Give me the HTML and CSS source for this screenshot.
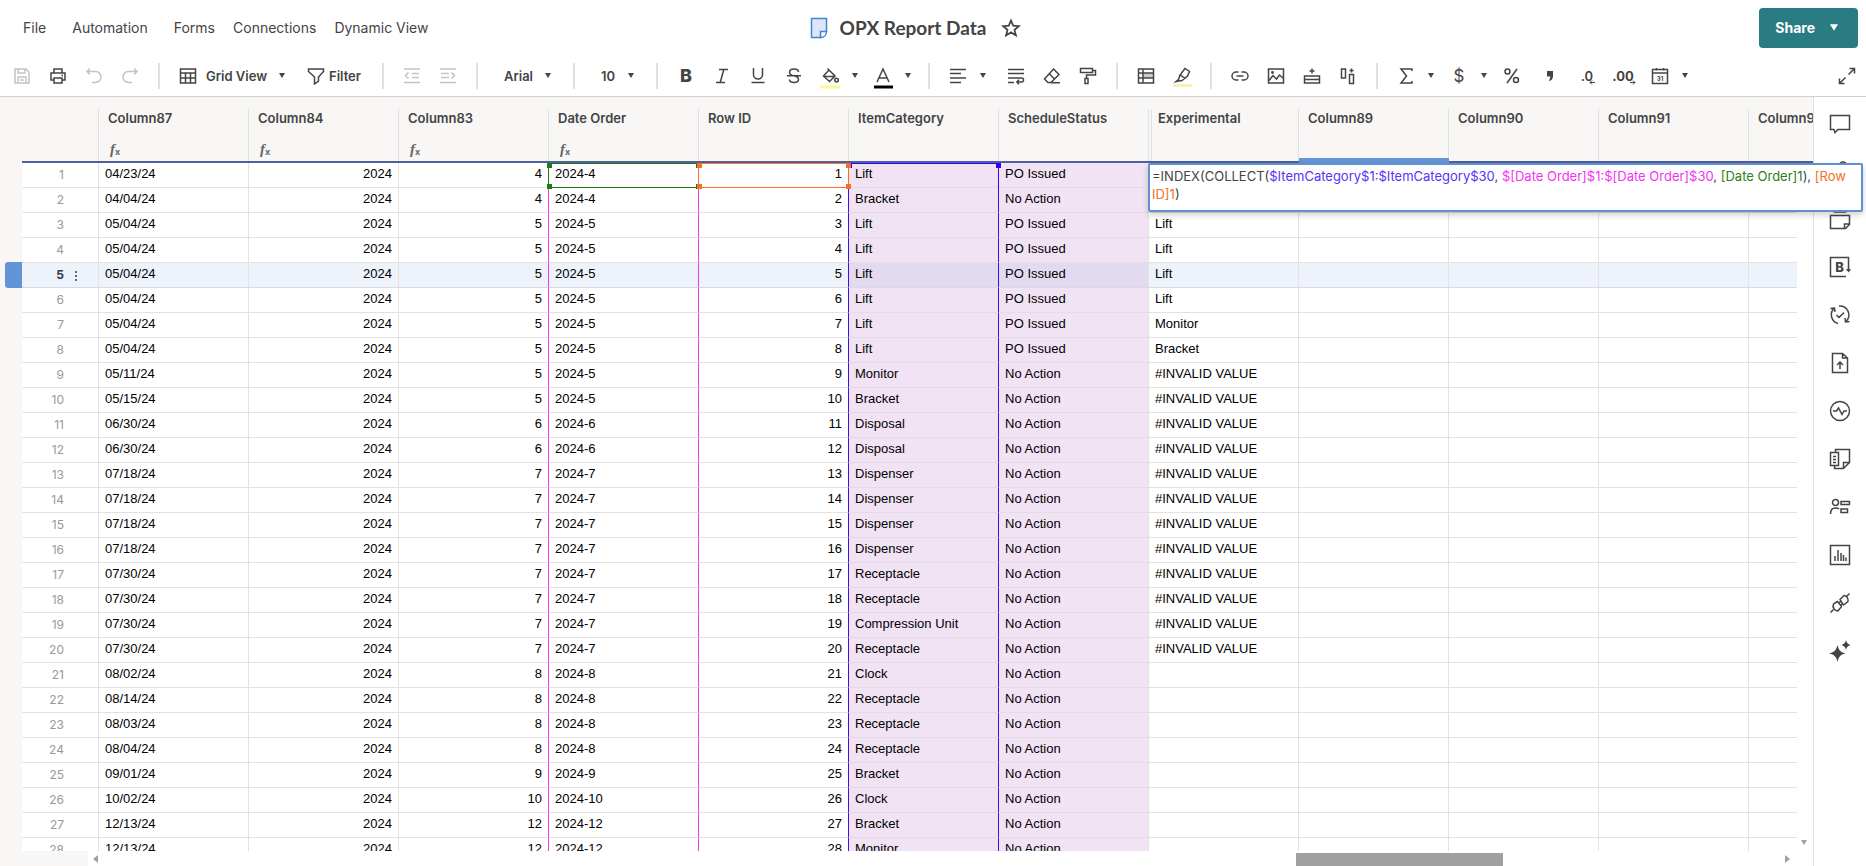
FILE: index.html
```
<!DOCTYPE html>
<html lang="en">
<head>
<meta charset="utf-8">
<title>OPX Report Data</title>
<link rel="stylesheet" href="styles.css">
</head>
<body>
<svg class="defs" aria-hidden="true">
  <symbol id="caret" viewBox="0 0 6 5"><path d="M0 0h6L3 5z" fill="currentColor"/></symbol>
</svg>

<header class="topbar">
  <nav class="menu">
    <button type="button">File</button>
    <button type="button">Automation</button>
    <button type="button">Forms</button>
    <button type="button" class="tight">Connections</button>
    <button type="button" class="tight">Dynamic View</button>
  </nav>
  <div class="title">
    <svg width="18" height="22" viewBox="0 0 18 22"><path d="M1.500 1.500h15v13l-5 6h-10z" fill="#dce6f8" stroke="#3f86cf" stroke-width="1.500"/><path d="M10.500 20.500v-6h6c0 3.500-2.500 6-6 6z" fill="#fff" stroke="#3f86cf" stroke-width="1.500"/></svg>
    <h1>OPX Report Data</h1>
    <button type="button" aria-label="Favorite"><svg width="20" height="20" viewBox="0 0 20 20"><path d="M10 2.500l2.200 5.200 5.600.5-4.300 3.700 1.400 5.500-4.900-3-4.900 3 1.400-5.500L2.200 8.200l5.600-.5z" fill="none" stroke="#444" stroke-width="1.800"/></svg></button>
  </div>
  <button type="button" class="share">Share <svg width="8" height="7"><use href="#caret"/></svg></button>
</header>

<div class="toolbar" role="toolbar" aria-label="Formatting">
  <button type="button" class="off" aria-label="Save" disabled><svg class="ic" viewBox="0 0 18 18"><path d="M2 2h11l3 3v11H2z M5 2v4h7V2 M5 16v-6h8v6 M7 13h4"/></svg></button>
  <button type="button" aria-label="Print"><svg class="ic" viewBox="0 0 18 18"><path d="M5 6V2h8v4 M5 13H2V6h14v7h-3 M5 11h8v5H5z M12.500 8.500h1.500"/></svg></button>
  <button type="button" class="off" aria-label="Undo" disabled><svg class="ic" viewBox="0 0 18 18"><path d="M5 1.500L2 4.500l3 3 M2 4.500h8.500a5.500 5.500 0 0 1 0 11H7"/></svg></button>
  <button type="button" class="off" aria-label="Redo" disabled><svg class="ic" viewBox="0 0 18 18"><path d="M13 1.500l3 3-3 3 M16 4.500H7.500a5.500 5.500 0 0 0 0 11H11"/></svg></button>
  <i class="sep"></i>
  <button type="button" class="view"><svg class="ic" viewBox="0 0 18 18"><path d="M1.500 2h15v14h-15z M1.500 6h15 M1.500 11h15 M6.500 6v10 M11.500 6v10"/></svg>Grid View <svg class="car"><use href="#caret"/></svg></button>
  <button type="button" class="filter"><svg class="ic" viewBox="0 0 18 18"><path d="M1.500 2h15v2.500L11.500 10v4l-4 3v-7L1.500 4.500z"/></svg>Filter</button>
  <i class="sep"></i>
  <button type="button" class="off" aria-label="Outdent" disabled><svg class="ic" viewBox="0 0 18 18"><path d="M1 2h16 M9 6.500h7 M9 10.500h7 M1 15.500h16 M5.500 5.500L2.500 8.500l3 3"/></svg></button>
  <button type="button" class="off" aria-label="Indent" disabled><svg class="ic" viewBox="0 0 18 18"><path d="M1 2h16 M2 6.500h8 M2 10.500h8 M1 15.500h16 M12.500 5.500l3 3-3 3"/></svg></button>
  <i class="sep"></i>
  <label class="pick font"><select aria-label="Font"><option>Arial</option></select><svg class="car"><use href="#caret"/></svg></label>
  <i class="sep"></i>
  <label class="pick size"><select aria-label="Font size"><option>10</option></select><svg class="car"><use href="#caret"/></svg></label>
  <i class="sep"></i>
  <button type="button" class="bold" aria-label="Bold">B</button>
  <button type="button" aria-label="Italic"><svg class="ic" viewBox="0 0 18 18"><path d="M6 2.500h9 M3 15.500h9 M10.800 2.500l-3.600 13"/></svg></button>
  <button type="button" aria-label="Underline"><svg class="ic" viewBox="0 0 18 18"><path d="M4.500 1v6.500a4.500 4.500 0 0 0 9 0V1 M2.500 15.500h13"/></svg></button>
  <button type="button" aria-label="Strikethrough"><svg class="ic" viewBox="0 0 18 18"><path d="M13.500 5c0-2-2-3-4.500-3S4.500 3 4.500 5.200C4.500 7 6 8.200 9 8.800s4.500 2 4.500 3.700-2 3-4.500 3-4.500-1-4.500-3 M2 8.800h14"/></svg></button>
  <button type="button" aria-label="Fill color"><svg class="ic tall" viewBox="0 0 20 22"><path d="M9 3l6 6-5.500 5.500L3.500 9z M4 9.500h10.500 M7.500 1.500l4 4"/><circle cx="16.500" cy="13" r="1.800"/><path class="yellow" d="M0 20h20"/></svg></button>
  <button type="button" class="drop" aria-label="Fill color options"><svg class="car"><use href="#caret"/></svg></button>
  <button type="button" aria-label="Text color"><svg class="ic tall" viewBox="0 0 20 22"><path d="M4 15L10 2l6 13 M6 11h8"/><path class="black" d="M1 20h19"/></svg></button>
  <button type="button" class="drop" aria-label="Text color options"><svg class="car"><use href="#caret"/></svg></button>
  <i class="sep"></i>
  <button type="button" aria-label="Align"><svg class="ic" viewBox="0 0 18 18"><path d="M1 2.500h16 M1 6.500h11 M1 11h16 M1 15.500h11"/></svg></button>
  <button type="button" class="drop wide" aria-label="Align options"><svg class="car"><use href="#caret"/></svg></button>
  <button type="button" aria-label="Wrap text"><svg class="ic" viewBox="0 0 18 18"><path d="M1 2.500h16 M1 6.500h16 M1 11h13.500a2 2 0 0 1 0 4H10 M1 15.500h6 M12 12.800L9.800 15l2.200 2.200"/></svg></button>
  <button type="button" aria-label="Clear format"><svg class="ic" viewBox="0 0 18 18"><path d="M10.500 2l5.500 5.500-8 8H5L1.500 12z M6 6.500l5.500 5.500 M8 15.800h9"/></svg></button>
  <button type="button" aria-label="Format painter"><svg class="ic" viewBox="0 0 18 18"><path d="M1.500 1.500h12v4h-12z M13.500 3.500h3V8H7.500v3 M6 11.500h3v5H6z"/></svg></button>
  <i class="sep"></i>
  <button type="button" aria-label="Conditional formatting"><svg class="ic" viewBox="0 0 18 18"><path d="M6 6h10.500v5H6z" class="shade"/><path d="M1.500 2h15v14h-15z M1.500 6h15 M1.500 11h15 M6 2v14"/></svg></button>
  <button type="button" aria-label="Highlight changes"><svg class="ic tall" viewBox="0 0 20 22"><path d="M13 1.500L8 8l-1.500 4.500L4 14.500l6-1L15.500 9l2-4.500z M8.500 8l4.500 3.500"/><path class="cream" d="M1 18.500h19"/></svg></button>
  <i class="sep"></i>
  <button type="button" aria-label="Link"><svg class="ic" viewBox="0 0 18 18"><path d="M7.500 5H5a4 4 0 0 0 0 8h2.500 M10.500 5H13a4 4 0 0 1 0 8h-2.500 M5.500 9h7"/></svg></button>
  <button type="button" aria-label="Image"><svg class="ic" viewBox="0 0 18 18"><path d="M1.500 2h15v14h-15z M2 13.500l4-5 3.500 3.500L12.500 8l4 3.500"/><circle cx="5.500" cy="5.500" r=".7"/></svg></button>
  <button type="button" aria-label="Insert row"><svg class="ic" viewBox="0 0 18 18"><path d="M1.500 9h15v7h-15z M1.500 12.500h15 M9 1.500v5 M6.500 4h5"/></svg></button>
  <button type="button" aria-label="Insert column"><svg class="ic" viewBox="0 0 18 18"><path d="M2.500 2h4v9h-4z M10.500 7.500h4v9h-4z M12.500 1.500v4 M10.500 3.500h4"/></svg></button>
  <i class="sep"></i>
  <button type="button" aria-label="Sum"><svg class="ic" viewBox="0 0 18 18"><path d="M15 4V2H4l5.500 7L4 16h11v-2"/></svg></button>
  <button type="button" class="drop" aria-label="Functions"><svg class="car"><use href="#caret"/></svg></button>
  <button type="button" class="dollar" aria-label="Currency">$</button>
  <button type="button" class="drop" aria-label="Currency options"><svg class="car"><use href="#caret"/></svg></button>
  <button type="button" aria-label="Percent"><svg class="ic" viewBox="0 0 18 18"><circle cx="4.500" cy="4.500" r="2.500"/><circle cx="13" cy="13" r="2.500"/><path d="M14 2L4 16"/></svg></button>
  <button type="button" class="comma" aria-label="Thousands"><svg class="ic" viewBox="0 0 18 18"><path class="solid" d="M6 4h6v5c0 3-1.500 4.500-4 5l1.500-4.500H6z"/></svg></button>
  <button type="button" class="dec" aria-label="Decrease decimals">.0<svg width="6" height="5" viewBox="0 0 6 5"><path d="M6 2.500H1 M3 .5l-2 2 2 2"/></svg></button>
  <button type="button" class="dec more" aria-label="Increase decimals">.00<svg width="6" height="5" viewBox="0 0 6 5"><path d="M0 2.500h5 M3 .5l2 2-2 2"/></svg></button>
  <button type="button" aria-label="Date format"><svg class="ic" viewBox="0 0 18 18"><path d="M1.500 2.500h15v14h-15z M1.500 6h15 M5.500 1v2.500 M12.500 1v2.500"/><text x="9" y="14" text-anchor="middle">31</text></svg></button>
  <button type="button" class="drop" aria-label="Date options"><svg class="car"><use href="#caret"/></svg></button>
  <button type="button" class="expand" aria-label="Full screen"><svg class="ic" viewBox="0 0 18 18"><path d="M10.500 7.500l6-6 M11.500 1.500h5v5 M7.500 10.500l-6 6 M1.500 11.500v5h5"/></svg></button>
</div>

<main class="main">
  <section class="sheet">
    <div class="grid">
      <table>
        <colgroup><col class="c-gutter"><col class="c-num"><col class="c"><col class="c"><col class="c"><col class="c"><col class="c"><col class="c"><col class="c"><col class="c"><col class="c"><col class="c"><col class="c"><col><col class="c-scroll"></colgroup>
        <thead><tr id="head"></tr></thead>
        <tbody id="rows"></tbody>
      </table>
      <svg class="down"><use href="#caret"/></svg>
    </div>
    <div class="hscroll">
      <span class="corner"></span>
      <svg class="left" width="5" height="8" viewBox="0 0 5 8"><path d="M5 0v8L0 4z" fill="#a0a0a0"/></svg>
      <div class="track"><div class="thumb"></div></div>
      <svg class="right" width="5" height="8" viewBox="0 0 5 8"><path d="M0 0v8l5-4z" fill="#a0a0a0"/></svg>
    </div>
  </section>
  <aside class="side">
    <button type="button" aria-label="Conversations"><svg viewBox="0 0 22 22"><path d="M1.500 3.500h19v14H9l-3 3-1-3H1.500z"/></svg></button>
    <button type="button" aria-label="Attachments"><svg viewBox="0 0 22 22"><path d="M17 8v7a6 6 0 0 1-12 0V6M18 6a4 4 0 0 0-8 0v8"/></svg></button>
    <button type="button" aria-label="Proofs"><svg viewBox="0 0 22 22"><path d="M4.500 4h13 M1.500 7.500h19v9l-4 4h-15z M15.500 20.500v-4.500h5"/></svg></button>
    <button type="button" aria-label="Brandfolder"><svg viewBox="0 0 22 22"><path d="M17 20.500H1.500v-19h18V12 M19.500 11v4"/><path class="solid" d="M17 13h5l-2.500 3.500z"/><text x="10.500" y="16" text-anchor="middle">B</text></svg></button>
    <button type="button" aria-label="Update requests"><svg viewBox="0 0 22 22"><path d="M9 19.500A9 9 0 0 1 4.500 5 M1.500 4.500l4-.5.5 4 M10 2a9 9 0 0 1 7.500 15 M20.500 17.500l-4 .5-.5-4 M7.500 11l2.500 2.500 5-5"/></svg></button>
    <button type="button" aria-label="Publish"><svg viewBox="0 0 22 22"><path d="M3.500 1.500h10l5 4.500v14.500h-15z M13.500 1.500V6h5 M11 17v-7 M8 13l3-3 3 3"/></svg></button>
    <button type="button" aria-label="Activity log"><svg viewBox="0 0 22 22"><circle cx="11" cy="11" r="9.500"/><path d="M4 11h3.500l2-3 3.500 6.500 2-3.500h3"/></svg></button>
    <button type="button" aria-label="Summary"><svg viewBox="0 0 22 22"><path d="M6.500 4.500v-3h14v13l-6 6h-9v-3 M14.500 20.500v-6h6 M1.500 4.500h8v13h-8z M4 8.500h3 M4 11.500h3 M4 14.500h3"/></svg></button>
    <button type="button" aria-label="Contacts"><svg viewBox="0 0 22 22"><circle cx="6.500" cy="6.500" r="3"/><path d="M1.500 18c0-4 2-6 5-6 1.500 0 2.500.2 3.500.8 M12 5.500h8.500v3H12z M12 13h6.500v3.500H12z"/></svg></button>
    <button type="button" aria-label="Charts"><svg viewBox="0 0 22 22"><path d="M1.500 1.500h19v19h-19z M6 12v5 M9 6v11 M12 9v8 M14.500 11v6 M17 13.500v3.500" /></svg></button>
    <button type="button" aria-label="Integrations"><svg viewBox="0 0 22 22"><path d="M1.500 20.500l3-3 M17.500 4.500l3-3 M11 7.500l4-4a5 5 0 0 1 4 6l-4.500 3.500z M8.500 9.500l-4 2.500a5 5 0 0 0 4.500 7l3.500-4.500z M10 11l2-2M12 13l2-2"/></svg></button>
    <button type="button" aria-label="AI tools"><svg viewBox="0 0 22 22"><path class="solid" d="M8.500 5c1.300 5.300 2.700 7 8 8.500-5.300 1.300-6.700 3-8 8.500-1.300-5.500-3-7.200-8.500-8.500C5.500 12 7.200 10.300 8.500 5z M17 0c.8 3.200 1.700 4 5 5-3.300.9-4.200 1.800-5 5-.8-3.200-1.700-4.100-5-5 3.300-1 4.200-1.800 5-5z"/></svg></button>
  </aside>
  <div class="formula" role="textbox" aria-label="Formula" contenteditable="true" spellcheck="false">=INDEX(COLLECT(<span class="f-violet">$ItemCategory$1:$ItemCategory$30</span>, <span class="f-pink">$[Date Order]$1:$[Date Order]$30</span>, <span class="f-green">[Date Order]1</span>), <span class="f-orange">[Row ID]1</span>)</div>
</main>
<script src="script.js"></script>
</body>
</html>
```
FILE: styles.css
```
* { box-sizing: border-box; }
body {
  margin: 0;
  height: 100vh;
  display: flex;
  flex-direction: column;
  overflow: hidden;
  background: #fff;
  color: #444;
  font-family: Inter, "Liberation Sans", sans-serif;
  font-size: 14px;
}
button, select {
  border: 0;
  margin: 0;
  padding: 0;
  background: none;
  font: inherit;
  color: inherit;
}
.defs { display: none; }

/* top bar */
.topbar {
  display: grid;
  grid-template-columns: 1fr auto 1fr;
  align-items: center;
  height: 55px;
  padding: 0 8px;
  flex: none;
}
.menu { display: flex; gap: 26px; padding: 0 0 1px 15px; }
.menu .tight { margin-left: -8px; }
.title { display: flex; align-items: center; padding-right: 35px; }
.title h1 {
  margin: 0 15px 0 12px;
  font: 700 19px/24px Lato, sans-serif;
}
.title svg { display: block; }
.share {
  justify-self: end;
  display: flex;
  align-items: center;
  gap: 15px;
  height: 40px;
  padding: 0 20px 0 16px;
  border-radius: 4px;
  background: #287c82;
  color: #fff;
  font-weight: 700;
}

/* toolbar */
.toolbar {
  display: flex;
  align-items: center;
  height: 42px;
  flex: none;
  padding: 0 1px 0 4px;
  border-bottom: 1px solid #d0d0d0;
}
.toolbar > button {
  flex: none;
  width: 36px;
  height: 36px;
  display: flex;
  align-items: center;
  justify-content: center;
}
.toolbar .off { color: #c4c4c4; }
.ic { width: 18px; height: 18px; flex: none; }
.ic, .side svg, .dec svg {
  fill: none;
  stroke: currentColor;
  stroke-width: 1.5;
}
.ic.tall { width: 20px; height: 22px; margin-top: 4px; }
.ic text { font: 700 6px Inter, sans-serif; fill: #444; stroke: none; }
.ic .solid, .side .solid { fill: #444; stroke: none; }
.ic .shade { fill: #ccc; stroke: none; }
.ic .yellow { stroke: #fafa8c; stroke-width: 3; }
.ic .cream { stroke: #fdeeb4; stroke-width: 3; }
.ic .black { stroke: #000; stroke-width: 3; }
.car { width: 6px; height: 5px; flex: none; }
.sep { flex: none; width: 2px; height: 26px; margin: 0 10px; background: #e0e0e0; }
.toolbar > .view, .toolbar > .filter { justify-content: start; font-weight: 600; font-size: 13px; }
.toolbar > .view { width: 128px; padding-left: 9px; }
.view .ic { margin-right: 9px; }
.view .car { margin: 0 13px 0 auto; }
.toolbar > .filter { width: 74px; padding-left: 9px; }
.filter .ic { margin-right: 4px; }
.pick { flex: none; display: grid; align-items: center; font-weight: 600; font-size: 13px; }
.pick select { grid-area: 1 / 1; appearance: none; height: 32px; padding-left: 16px; outline: 0; }
.pick .car { grid-area: 1 / 1; justify-self: end; margin-right: 12px; pointer-events: none; }
.font { width: 75px; }
.size { width: 61px; }
.toolbar > .bold { font: 800 18px Inter, sans-serif; }
.toolbar > .drop { width: 17px; justify-content: start; padding-left: 4px; }
.toolbar > .drop.wide { width: 22px; }
.toolbar > .dollar { font-size: 17px; }
.toolbar > .comma { width: 40px; }
.toolbar > .dec { font-size: 13px; font-weight: 600; align-items: center; }
.toolbar > .more { font-weight: 700; }
.dec svg { align-self: end; margin: 0 0 9px -4px; stroke-width: 1; }
.toolbar > .expand { margin-left: auto; }

/* sheet */
.main { position: relative; flex: 1; min-height: 0; display: flex; }
.sheet { flex: 1; min-width: 0; display: flex; flex-direction: column; }
.grid { position: relative; flex: 1; min-height: 0; overflow: hidden; }
table { width: 100%; table-layout: fixed; border-collapse: separate; border-spacing: 0; }
.c-gutter { width: 22px; }
.c-num { width: 77px; }
.c { width: 150px; }
.c-scroll { width: 16px; }
th {
  height: 66px;
  padding: 12px 0 0;
  vertical-align: top;
  text-align: left;
  background: #f8f7f5;
  border-bottom: 2px solid #4f5f9f;
  font-size: 13px;
  font-weight: 600;
  overflow: hidden;
  white-space: nowrap;
}
th.gutter { border-bottom-color: #f8f7f5; }
th.current { border-bottom: 5px solid #6494d4; }
.head {
  height: 52px;
  padding-left: 9px;
  border-right: 1px solid #e0e0e0;
  line-height: 18px;
}
.current .head { height: 49px; }
.last .head { border-right: 0; }
.pinned .head { border-left: 1px solid #e0e0e0; margin-left: 2px; padding-left: 6px; }
.fx {
  display: block;
  margin-top: 13px;
  padding-left: 2px;
  font: italic 700 15px/18px "Liberation Serif", serif;
  color: #666;
}
.fx sub { font: 700 9px/9px Inter, sans-serif; vertical-align: -1px; }
td {
  position: relative;
  height: 25px;
  padding: 0 6px;
  vertical-align: top;
  border-right: 1px solid #e2e2e2;
  border-bottom: 1px solid #e2e2e2;
  color: #000;
  font: 13px/21px "Liberation Sans", Arial, sans-serif;
  white-space: nowrap;
}
td.gutter { background: #f8f7f5; border: 0; padding: 0; }
td.num {
  padding-right: 34px;
  text-align: right;
  color: #999;
  font: 12px/24px Inter, sans-serif;
}
td.scroll, td.edge { border-right: 0; }
td.scroll { border-bottom: 0; }
td.r { text-align: right; }
td.magenta { border-right-color: #f434f0; }
td.blue { border-right-color: #3a10f0; }
td.range { background: #f1e3f4; border-bottom-color: #e3dee5; }
.active td:not(.gutter):not(.scroll) { background: #edf2fb; border-bottom-color: #d5dae4; }
.active td.range:not(.gutter):not(.scroll) { background: #e3daf1; }
.active td.num { color: #303848; font-weight: 700; }
.marker {
  position: absolute;
  left: 5px;
  right: 0;
  top: -1px;
  bottom: 0;
  background: #6494d8;
  border-radius: 3px 0 0 3px;
}
.dots { position: absolute; left: 53px; top: 8px; width: 3px; height: 11px; fill: #666; }
.box { position: absolute; inset: 0 -1px -1px -1px; border: 1px solid; pointer-events: none; z-index: 1; }
.box i { position: absolute; width: 5px; height: 5px; background: currentColor; }
.box i:nth-child(1) { left: -2px; top: -1px; }
.box i:nth-child(2) { right: -3px; top: -1px; }
.box i:nth-child(3) { left: -2px; bottom: -2px; }
.box i:nth-child(4) { right: -3px; bottom: -2px; }
.box.g { color: #1f7d10; }
.box.o { color: #f97020; z-index: 2; }
.box.b { color: #3200ff; border-bottom: 0; }
.box.b i:nth-child(n+3) { display: none; }
.down { position: absolute; right: 6px; bottom: 6px; width: 6px; height: 5px; color: #a0a0a0; }

.hscroll { flex: none; display: flex; align-items: center; height: 15px; padding-right: 23px; }
.corner { width: 88px; height: 15px; margin-right: 5px; background: #f8f7f5; }
.track { flex: 1; height: 13px; margin-top: 2px; display: flex; }
.thumb { width: 12.3%; margin-left: 71%; background: #a0a0a0; }

/* right rail */
.side { flex: none; width: 53px; padding: 2px 0; border-left: 1px solid #e0e0e0; display: flex; flex-direction: column; }
.side button { height: 48px; display: grid; place-items: center; }
.side svg { width: 22px; height: 22px; color: #444; overflow: visible; }
.side text { font: 800 13px Inter, sans-serif; fill: #444; stroke: none; }

/* cell editor floating over the grid */
.formula {
  position: absolute;
  left: 1148px;
  right: 3px;
  top: 66px;
  min-height: 49px;
  padding: 2px 10px 7px 2px;
  border: 2px solid #6090d0;
  border-radius: 2px;
  background: #fff;
  box-shadow: 0 3px 6px rgba(0, 0, 0, .18);
  font-size: 13px;
  line-height: 18px;
  z-index: 3;
  outline: 0;
}
.f-violet { color: #5a32f5; }
.f-pink { color: #f432f0; }
.f-green { color: #2a8018; }
.f-orange { color: #f07028; }
```
FILE: script.js
```
const columns = ["Column87", "Column84", "Column83", "Date Order", "Row ID", "ItemCategory",
  "ScheduleStatus", "Experimental", "Column89", "Column90", "Column91", "Column92"];

// date, period, item, status, experimental
const data = [
  ["04/23/24", 4, "Lift", "PO Issued", ""],
  ["04/04/24", 4, "Bracket", "No Action", ""],
  ["05/04/24", 5, "Lift", "PO Issued", "Lift"],
  ["05/04/24", 5, "Lift", "PO Issued", "Lift"],
  ["05/04/24", 5, "Lift", "PO Issued", "Lift"],
  ["05/04/24", 5, "Lift", "PO Issued", "Lift"],
  ["05/04/24", 5, "Lift", "PO Issued", "Monitor"],
  ["05/04/24", 5, "Lift", "PO Issued", "Bracket"],
  ["05/11/24", 5, "Monitor", "No Action", "#INVALID VALUE"],
  ["05/15/24", 5, "Bracket", "No Action", "#INVALID VALUE"],
  ["06/30/24", 6, "Disposal", "No Action", "#INVALID VALUE"],
  ["06/30/24", 6, "Disposal", "No Action", "#INVALID VALUE"],
  ["07/18/24", 7, "Dispenser", "No Action", "#INVALID VALUE"],
  ["07/18/24", 7, "Dispenser", "No Action", "#INVALID VALUE"],
  ["07/18/24", 7, "Dispenser", "No Action", "#INVALID VALUE"],
  ["07/18/24", 7, "Dispenser", "No Action", "#INVALID VALUE"],
  ["07/30/24", 7, "Receptacle", "No Action", "#INVALID VALUE"],
  ["07/30/24", 7, "Receptacle", "No Action", "#INVALID VALUE"],
  ["07/30/24", 7, "Compression Unit", "No Action", "#INVALID VALUE"],
  ["07/30/24", 7, "Receptacle", "No Action", "#INVALID VALUE"],
  ["08/02/24", 8, "Clock", "No Action", ""],
  ["08/14/24", 8, "Receptacle", "No Action", ""],
  ["08/03/24", 8, "Receptacle", "No Action", ""],
  ["08/04/24", 8, "Receptacle", "No Action", ""],
  ["09/01/24", 9, "Bracket", "No Action", ""],
  ["10/02/24", 10, "Clock", "No Action", ""],
  ["12/13/24", 12, "Bracket", "No Action", ""],
  ["12/13/24", 12, "Monitor", "No Action", ""]
];

const withFormula = ["Column87", "Column84", "Column83", "Date Order"];
const headClass = { Experimental: "pinned", Column89: "current", Column92: "last" };

document.getElementById("head").innerHTML =
  '<th class="gutter"></th><th><div class="head"></div></th>' +
  columns.map((name, i) => {
    const span = i === columns.length - 1 ? ' colspan="2"' : "";
    const fx = withFormula.includes(name) ? '<span class="fx">f<sub>x</sub></span>' : "";
    return `<th scope="col" class="${headClass[name] || ""}"${span}><div class="head">${name}${fx}</div></th>`;
  }).join("");

const box = kind => `<div class="box ${kind}"><i></i><i></i><i></i><i></i></div>`;

document.getElementById("rows").innerHTML = data.map(([date, period, item, status, exp], i) => {
  const n = i + 1;
  const first = n === 1;
  const active = n === 5;
  const dots = '<svg class="dots" viewBox="0 0 3 11"><path d="M0 0h2v2H0z M0 4h2v2H0z M0 8h2v2H0z"/></svg>';
  return `<tr class="${active ? "active" : ""}">
    <td class="gutter">${active ? '<span class="marker"></span>' : ""}</td>
    <td class="num">${n}${active ? dots : ""}</td>
    <td>${date}</td><td class="r">2024</td>
    <td class="r magenta">${period}</td>
    <td class="magenta">2024-${period}${first ? box("g") : ""}</td>
    <td class="r blue">${n}${first ? box("o") : ""}</td>
    <td class="range blue">${item}${first ? box("b") : ""}</td>
    <td class="range">${status}</td><td>${exp}</td>
    <td></td><td></td><td></td><td class="edge"></td><td class="scroll"></td></tr>`;
}).join("");
```
